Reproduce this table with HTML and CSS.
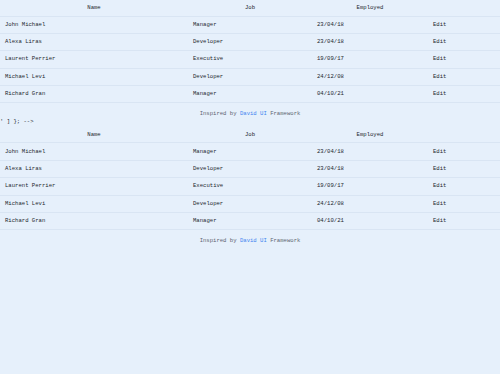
FILE: index.html
```html
<!DOCTYPE html>
<html lang="en">
<head>
<meta charset="utf-8">
<title>Employees</title>
<link rel="stylesheet" href="styles.css">
</head>
<body>
<div class="page">
  <section class="block">
    <table class="grid">
      <colgroup><col class="c1"><col class="c2"><col class="c3"><col class="c4"></colgroup>
      <thead>
        <tr><th>Name</th><th>Job</th><th>Employed</th><th></th></tr>
      </thead>
      <tbody>
        <tr><td>John Michael</td><td>Manager</td><td>23/04/18</td><td>Edit</td></tr>
        <tr><td>Alexa Liras</td><td>Developer</td><td>23/04/18</td><td>Edit</td></tr>
        <tr><td>Laurent Perrier</td><td>Executive</td><td>19/09/17</td><td>Edit</td></tr>
        <tr><td>Michael Levi</td><td>Developer</td><td>24/12/08</td><td>Edit</td></tr>
        <tr><td>Richard Gran</td><td>Manager</td><td>04/10/21</td><td>Edit</td></tr>
      </tbody>
    </table>
    <p class="credit">Inspired by <a href="#">David UI</a> Framework</p>
  </section>
  <div class="leftover">' ] }; --&gt;</div>
  <section class="block block-second">
    <table class="grid">
      <colgroup><col class="c1"><col class="c2"><col class="c3"><col class="c4"></colgroup>
      <thead>
        <tr><th>Name</th><th>Job</th><th>Employed</th><th></th></tr>
      </thead>
      <tbody>
        <tr><td>John Michael</td><td>Manager</td><td>23/04/18</td><td>Edit</td></tr>
        <tr><td>Alexa Liras</td><td>Developer</td><td>23/04/18</td><td>Edit</td></tr>
        <tr><td>Laurent Perrier</td><td>Executive</td><td>19/09/17</td><td>Edit</td></tr>
        <tr><td>Michael Levi</td><td>Developer</td><td>24/12/08</td><td>Edit</td></tr>
        <tr><td>Richard Gran</td><td>Manager</td><td>04/10/21</td><td>Edit</td></tr>
      </tbody>
    </table>
    <p class="credit">Inspired by <a href="#">David UI</a> Framework</p>
  </section>
</div>
</body>
</html>
```

FILE: styles.css
```css
html, body {
  margin: 0;
  padding: 0;
  background: #e6f0fb;
}
body {
  font-family: "Liberation Mono", "DejaVu Sans Mono", monospace;
  font-size: 5.6px;
  color: #22262d;
  width: 500px;
  height: 374px;
  overflow: hidden;
}
.page {
  display: flex;
  flex-direction: column;
  padding-top: 0.5px;
}
.block-second {
  margin-top: 1px;
}
.grid {
  width: 500px;
  border-collapse: collapse;
  table-layout: fixed;
}
.c1 { width: 188px; }
.c2 { width: 124px; }
.c3 { width: 116px; }
.c4 { width: 72px; }
.grid th,
.grid td {
  padding: 0 0 0 5px;
  vertical-align: middle;
  line-height: 8px;
  border-bottom: 1px solid #d9e5f3;
  white-space: nowrap;
}
.grid th {
  padding: 0;
  height: 15px;
  font-weight: normal;
  text-align: center;
}
.grid td {
  height: 16.4px;
  text-align: left;
}
.credit {
  margin: 0;
  padding-top: 6.2px;
  line-height: 8.4px;
  text-align: center;
  color: #5d6470;
}
.credit a {
  color: #3f84f0;
  text-decoration: none;
}
.leftover {
  line-height: 8.4px;
}
```
